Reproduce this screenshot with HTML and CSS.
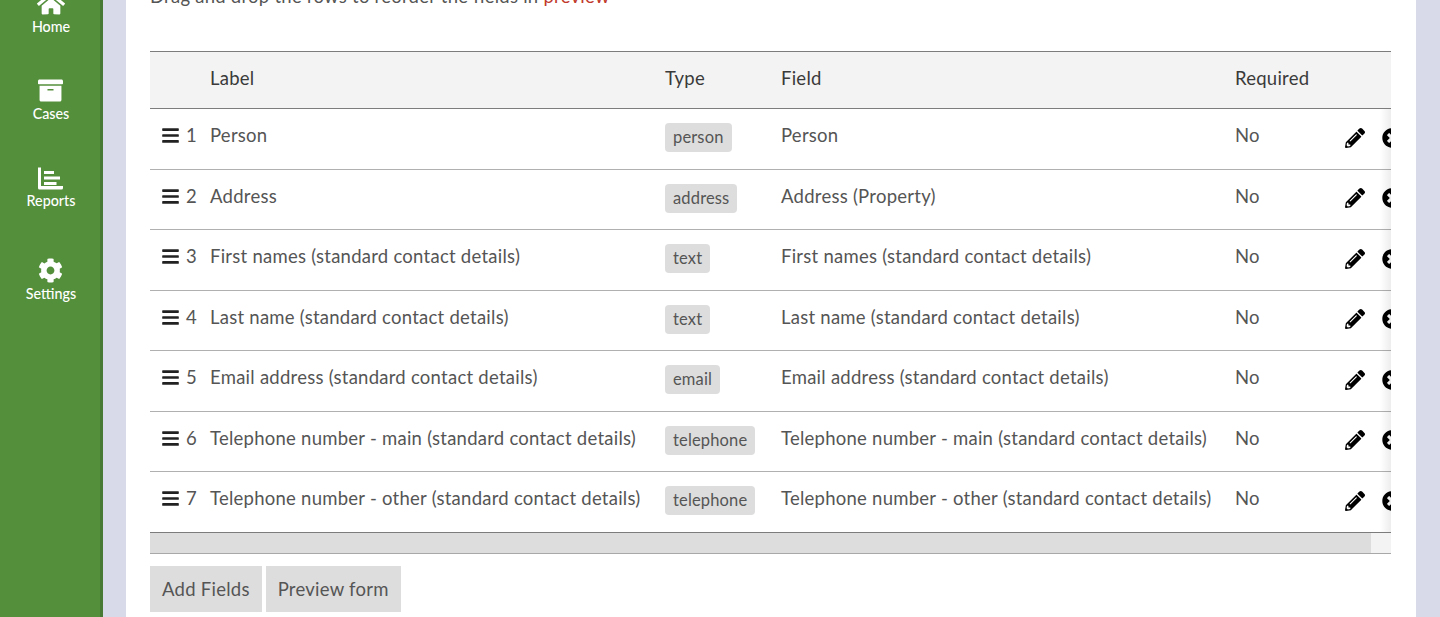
FILE: index.html
```html
<!DOCTYPE html>
<html lang="en">
<head>
  <meta charset="UTF-8" />
  <title>Form fields</title>
  <link rel="stylesheet" href="styles.css">
</head>
<body>
  <svg class="sprites" width="0" height="0">
    <symbol id="i-bars" viewBox="0 0 448 512"><path d="M16 132h416c8.837 0 16-7.163 16-16V76c0-8.837-7.163-16-16-16H16C7.163 60 0 67.163 0 76v40c0 8.837 7.163 16 16 16zm0 160h416c8.837 0 16-7.163 16-16v-40c0-8.837-7.163-16-16-16H16c-8.837 0-16 7.163-16 16v40c0 8.837 7.163 16 16 16zm0 160h416c8.837 0 16-7.163 16-16v-40c0-8.837-7.163-16-16-16H16c-8.837 0-16 7.163-16 16v40c0 8.837 7.163 16 16 16z"/></symbol>
    <symbol id="i-pencil" viewBox="0 0 512 512"><path d="M497.9 142.1l-46.1 46.1c-4.7 4.7-12.3 4.7-17 0l-111-111c-4.7-4.7-4.7-12.3 0-17l46.1-46.1c18.7-18.7 49.1-18.7 67.9 0l60.1 60.1c18.8 18.7 18.8 49.1 0 67.9zM284.2 99.8L21.6 362.4.4 483.9c-2.9 16.4 11.4 30.6 27.8 27.8l121.5-21.3 262.6-262.6c4.7-4.7 4.7-12.3 0-17l-111-111c-4.8-4.7-12.4-4.7-17.1 0zM124.1 339.9c-5.5-5.5-5.5-14.3 0-19.8l154-154c5.5-5.5 14.3-5.5 19.8 0s5.5 14.3 0 19.8l-154 154c-5.5 5.5-14.3 5.5-19.8 0zM88 424h48v36.3l-64.5 11.3-31.1-31.1L51.7 376H88v48z"/></symbol>
    <symbol id="i-times" viewBox="0 0 512 512"><path d="M256 8C119 8 8 119 8 256s111 248 248 248 248-111 248-248S393 8 256 8zm121.6 313.1c4.7 4.7 4.7 12.3 0 17L338 377.6c-4.7 4.7-12.3 4.7-17 0L256 312l-65.1 65.6c-4.7 4.7-12.3 4.7-17 0L134.4 338c-4.7-4.7-4.7-12.3 0-17l65.6-65-65.6-65.1c-4.7-4.7-4.7-12.3 0-17l39.6-39.6c4.7-4.7 12.3-4.7 17 0l65 65.7 65.1-65.6c4.7-4.7 12.3-4.7 17 0l39.6 39.6c4.7 4.7 4.7 12.3 0 17L312 256l65.6 65.1z"/></symbol>
  </svg>

  <nav class="sidebar">
    <a class="nav-item">
      <svg class="nav-icon home-icon" viewBox="0 0 576 512"><path d="M280.37 148.26L96 300.11V464a16 16 0 0 0 16 16l112.06-.29a16 16 0 0 0 15.92-16V368a16 16 0 0 1 16-16h64a16 16 0 0 1 16 16v95.64a16 16 0 0 0 16 16.05L464 480a16 16 0 0 0 16-16V300L295.67 148.26a12.19 12.19 0 0 0-15.3 0zM571.6 251.47L488 182.56V44.05a12 12 0 0 0-12-12h-56a12 12 0 0 0-12 12v72.61L318.47 43a48 48 0 0 0-61 0L4.34 251.47a12 12 0 0 0-1.6 16.9l25.5 31A12 12 0 0 0 45.15 301l235.22-193.74a12.19 12.19 0 0 1 15.3 0L530.9 301a12 12 0 0 0 16.9-1.6l25.5-31a12 12 0 0 0-1.7-16.93z"/></svg>
      <span>Home</span>
    </a>
    <a class="nav-item">
      <svg class="nav-icon" viewBox="0 0 512 512"><path d="M32 448c0 17.700 14.300 32 32 32h384c17.700 0 32-14.300 32-32V160H32v288zm160-212c0-6.600 5.400-12 12-12h104c6.600 0 12 5.400 12 12v8c0 6.600-5.400 12-12 12H204c-6.600 0-12-5.400-12-12v-8zM480 32H32C14.300 32 0 46.300 0 64v48c0 8.800 7.200 16 16 16h480c8.800 0 16-7.200 16-16V64c0-17.700-14.300-32-32-32z"/></svg>
      <span>Cases</span>
    </a>
    <a class="nav-item">
      <svg class="nav-icon" viewBox="0 0 25 25"><path d="M0 2.500h3V21h22v2a1.500 1.500 0 0 1-1.500 1.500h-22A1.500 1.500 0 0 1 0 23zM6 6h10v3H6zM6 11.500h16v3H6zM6 17h12.500v3H6z"/></svg>
      <span>Reports</span>
    </a>
    <a class="nav-item nav-item-last">
      <svg class="nav-icon" viewBox="0 0 512 512"><path d="M487.400 315.700l-42.600-24.600c4.300-23.200 4.300-47 0-70.200l42.600-24.600c4.900-2.800 7.100-8.600 5.500-14-11.100-35.600-30-67.800-54.700-94.600-3.800-4.100-10-5.100-14.800-2.300L380.800 110c-17.900-15.400-38.500-27.300-60.800-35.100V25.800c0-5.600-3.900-10.500-9.400-11.700-36.700-8.200-74.300-7.800-109.200 0-5.500 1.200-9.400 6.100-9.400 11.700V75c-22.200 7.900-42.800 19.800-60.800 35.100L88.700 85.500c-4.900-2.800-11-1.900-14.800 2.300-24.700 26.700-43.600 58.900-54.700 94.600-1.700 5.400.6 11.200 5.500 14L67.300 221c-4.300 23.200-4.300 47 0 70.200l-42.600 24.600c-4.900 2.800-7.100 8.600-5.500 14 11.100 35.600 30 67.800 54.700 94.600 3.800 4.100 10 5.100 14.800 2.300l42.600-24.600c17.900 15.400 38.500 27.300 60.800 35.100v49.200c0 5.600 3.900 10.500 9.400 11.700 36.700 8.200 74.300 7.800 109.200 0 5.500-1.200 9.400-6.100 9.400-11.700v-49.200c22.200-7.900 42.800-19.800 60.800-35.100l42.600 24.600c4.900 2.800 11 1.900 14.800-2.300 24.700-26.700 43.600-58.900 54.700-94.600 1.500-5.500-.7-11.300-5.600-14.100zM256 336c-44.100 0-80-35.900-80-80s35.900-80 80-80 80 35.900 80 80-35.900 80-80 80z"/></svg>
      <span>Settings</span>
    </a>
  </nav>

  <main class="card">
    <p class="intro">Drag and drop the rows to reorder the fields in <span class="intro-red">preview</span></p>

    <div class="table-wrap">
      <table class="fields">
        <thead>
          <tr>
            <th class="col-order"></th>
            <th class="col-label">Label</th>
            <th class="col-type">Type</th>
            <th class="col-field">Field</th>
            <th class="col-req">Required</th>
            <th class="col-actions"></th>
          </tr>
        </thead>
        <tbody id="rows">
          <tr>
            <td><svg class="bars"><use href="#i-bars"/></svg>1</td>
            <td>Person</td>
            <td><span class="badge">person</span></td>
            <td>Person</td>
            <td>No</td>
            <td class="actions"><svg class="act"><use href="#i-pencil"/></svg><svg class="act"><use href="#i-times"/></svg></td>
          </tr>
          <tr>
            <td><svg class="bars"><use href="#i-bars"/></svg>2</td>
            <td>Address</td>
            <td><span class="badge">address</span></td>
            <td>Address (Property)</td>
            <td>No</td>
            <td class="actions"><svg class="act"><use href="#i-pencil"/></svg><svg class="act"><use href="#i-times"/></svg></td>
          </tr>
          <tr>
            <td><svg class="bars"><use href="#i-bars"/></svg>3</td>
            <td>First names (standard contact details)</td>
            <td><span class="badge">text</span></td>
            <td>First names (standard contact details)</td>
            <td>No</td>
            <td class="actions"><svg class="act"><use href="#i-pencil"/></svg><svg class="act"><use href="#i-times"/></svg></td>
          </tr>
          <tr>
            <td><svg class="bars"><use href="#i-bars"/></svg>4</td>
            <td>Last name (standard contact details)</td>
            <td><span class="badge">text</span></td>
            <td>Last name (standard contact details)</td>
            <td>No</td>
            <td class="actions"><svg class="act"><use href="#i-pencil"/></svg><svg class="act"><use href="#i-times"/></svg></td>
          </tr>
          <tr>
            <td><svg class="bars"><use href="#i-bars"/></svg>5</td>
            <td>Email address (standard contact details)</td>
            <td><span class="badge">email</span></td>
            <td>Email address (standard contact details)</td>
            <td>No</td>
            <td class="actions"><svg class="act"><use href="#i-pencil"/></svg><svg class="act"><use href="#i-times"/></svg></td>
          </tr>
          <tr>
            <td><svg class="bars"><use href="#i-bars"/></svg>6</td>
            <td>Telephone number - main (standard contact details)</td>
            <td><span class="badge">telephone</span></td>
            <td>Telephone number - main (standard contact details)</td>
            <td>No</td>
            <td class="actions"><svg class="act"><use href="#i-pencil"/></svg><svg class="act"><use href="#i-times"/></svg></td>
          </tr>
          <tr>
            <td><svg class="bars"><use href="#i-bars"/></svg>7</td>
            <td>Telephone number - other (standard contact details)</td>
            <td><span class="badge">telephone</span></td>
            <td>Telephone number - other (standard contact details)</td>
            <td>No</td>
            <td class="actions"><svg class="act"><use href="#i-pencil"/></svg><svg class="act"><use href="#i-times"/></svg></td>
          </tr>
        </tbody>
      </table>
      <div class="edge-shadow"></div>
    </div>
    <div class="scrollbar"><div class="scroll-thumb"></div></div>

    <div class="buttons">
      <button class="btn">Add Fields</button>
      <button class="btn">Preview form</button>
    </div>
  </main>
</body>
</html>
```

FILE: styles.css
```css
:root {
  --green: #548f3c;
  --green-dark: #487a35;
  --page-bg: #d8daea;
  --text: #555;
  --head-text: #3a3a3a;
  --line: #b0b0b0;
  --line-dark: #7c7c7c;
  --grey: #dddddd;
}

* {
  box-sizing: border-box;
}

html, body {
  height: 100%;
}

body {
  margin: 0;
  display: flex;
  align-items: flex-start;
  overflow: hidden;
  background: var(--page-bg);
  color: var(--text);
  font-family: Lato, "Liberation Sans", sans-serif;
  font-size: 18.5px;
  letter-spacing: 0.25px;
}

.sprites {
  position: absolute;
}

.sidebar {
  flex: 0 0 103px;
  height: 100%;
  display: flex;
  flex-direction: column;
  align-items: center;
  overflow: hidden;
  padding-left: 2px;
  background: var(--green);
  border-right: 3px solid var(--green-dark);
  color: #fff;
  font-size: 14.3px;
  font-weight: 500;
  letter-spacing: 0;
}

.nav-item {
  display: flex;
  flex-direction: column;
  align-items: center;
  height: 87px;
  flex-shrink: 0;
}

.nav-item span {
  margin-top: 3px;
  line-height: 16px;
}

.nav-icon {
  display: block;
  width: 25px;
  height: 25px;
  fill: #fff;
}

.nav-item:first-child {
  margin-top: -9px;
}

.home-icon {
  width: 28px;
}

.nav-item:nth-child(3) {
  height: 93px;
}

.card {
  flex: 0 0 1290px;
  height: 100%;
  margin-left: 23px;
  padding: 0 25px 0 24px;
  background: #fff;
}

.intro {
  margin: -15px 0 43px;
  line-height: 23px;
}

.intro-red {
  color: #c0392b;
}

.table-wrap {
  position: relative;
  overflow: hidden;
  width: 1241px;
}

.fields {
  width: 1262px;
  table-layout: fixed;
  border-collapse: collapse;
}

.fields th {
  height: 57px;
  padding: 0 0 5px;
  background: #f3f3f3;
  border-top: 1px solid var(--line-dark);
  border-bottom: 1px solid var(--line-dark);
  color: var(--head-text);
  font-weight: 400;
  text-align: left;
}

.fields td {
  height: 60.5px;
  padding: 0 0 7px;
  border-bottom: 1px solid var(--line);
  white-space: nowrap;
}

.fields tr:last-child td {
  border-bottom: 1px solid var(--line-dark);
}

.col-order { width: 60px; }
.col-label { width: 455px; }
.col-type { width: 116px; }
.col-field { width: 454px; }
.col-req { width: 110px; }

.fields td:first-child {
  padding-left: 12px;
}

.bars {
  width: 17px;
  height: 19px;
  margin-right: 7px;
  vertical-align: -3px;
  fill: #222;
}

.badge {
  display: inline-block;
  margin-top: 5px;
  padding: 0 8px;
  border-radius: 4px;
  background: var(--grey);
  font-size: 16.5px;
  letter-spacing: 0.15px;
  line-height: 29px;
}

.fields td.actions {
  padding-top: 2px;
}

.act {
  width: 20px;
  height: 20px;
  margin-right: 17px;
  vertical-align: middle;
  fill: #000;
}

.edge-shadow {
  position: absolute;
  top: 58px;
  right: 0;
  bottom: 1px;
  width: 11px;
  background: linear-gradient(to right, rgba(0, 0, 0, 0), rgba(0, 0, 0, 0.07));
}

.scrollbar {
  width: 1241px;
  height: 21px;
  background: #f3f3f3;
  border-bottom: 1px solid #a8a8a8;
}

.scroll-thumb {
  width: 1221px;
  height: 100%;
  background: var(--grey);
}

.buttons {
  display: flex;
  gap: 4px;
  margin-top: 12px;
}

.btn {
  height: 46px;
  padding: 0 12px;
  border: none;
  background: var(--grey);
  color: var(--text);
  font: inherit;
  letter-spacing: inherit;
}
```
